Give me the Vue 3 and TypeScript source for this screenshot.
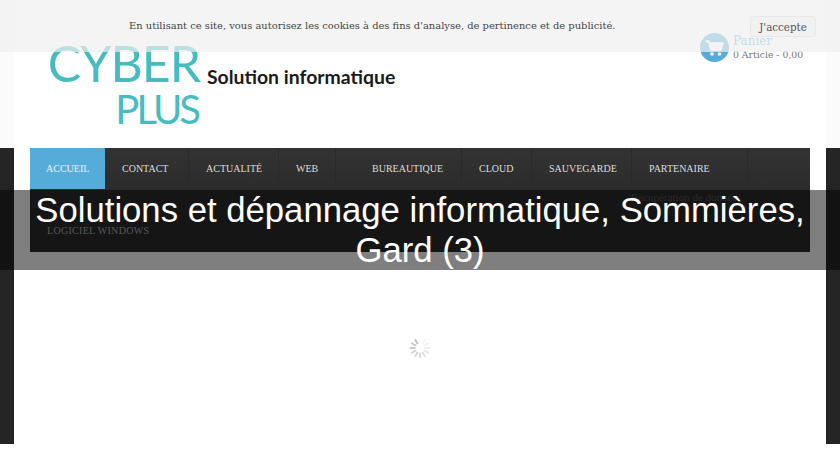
<script setup lang="ts">
interface MenuItem {
  label: string
  width: number
  active?: boolean
  wide?: boolean
}

const menuItems: MenuItem[] = [
  { label: 'Accueil', width: 75, active: true },
  { label: 'Contact', width: 84 },
  { label: 'Actualité', width: 90 },
  { label: 'Web', width: 57 },
  { label: 'Bureautique', width: 126, wide: true },
  { label: 'Cloud', width: 70 },
  { label: 'Sauvegarde', width: 100 },
  { label: 'Partenaire', width: 116 },
]

// darkest spoke sits top-left, as in the reference frame
const spokes = Array.from({ length: 12 }, (_, i) => ({
  angle: i * 30,
  opacity: 0.04 + i * 0.045,
}))
</script>

<template>
  <div class="page">
    <header class="top">
      <div class="logo">
        <div class="logo-mark">
          <span class="cyber">CYBER</span>
          <span class="plus">PLUS</span>
        </div>
        <span class="tagline">Solution informatique</span>
      </div>
      <div class="cart">
        <div class="cart-icon">
          <svg width="20" height="18" viewBox="0 0 20 18">
            <path d="M1 2h3l1.5 9h10.5l2-7H5z" fill="#fff" stroke="#fff" stroke-width="1.4" stroke-linejoin="round" />
            <circle cx="7" cy="15" r="1.8" fill="#fff" />
            <circle cx="14.5" cy="15" r="1.8" fill="#fff" />
          </svg>
        </div>
        <div class="cart-text">
          <div class="cart-title">Panier</div>
          <div class="cart-count">0 Article - 0,00</div>
        </div>
      </div>
    </header>

    <div class="band">
      <main class="panel">
        <nav class="menu">
          <div class="menu-row">
            <a
              v-for="item in menuItems"
              :key="item.label"
              class="menu-item"
              :class="{ active: item.active, wide: item.wide }"
              :style="{ width: item.width + 'px' }"
            >{{ item.label }}</a>
          </div>
          <div class="menu-sub">Récupération de données</div>
          <div class="menu-last">Logiciel Windows</div>
        </nav>
        <div class="loader">
          <svg width="22" height="22" viewBox="-11 -11 22 22">
            <rect
              v-for="s in spokes"
              :key="s.angle"
              x="-1"
              y="-10"
              width="2"
              height="5.5"
              fill="#888"
              :opacity="s.opacity"
              :transform="`rotate(${s.angle})`"
            />
          </svg>
        </div>
      </main>
    </div>

    <div class="cookie">
      <p class="cookie-text">En utilisant ce site, vous autorisez les cookies à des fins d'analyse, de pertinence et de publicité.</p>
      <button class="cookie-btn" type="button">J'accepte</button>
    </div>

    <div class="title-bar">
      <h1>Solutions et dépannage informatique, Sommières, Gard (3)</h1>
    </div>
  </div>
</template>

<style>
html,
body {
  margin: 0;
  background: #fff;
  overflow: hidden;
}
</style>

<style scoped>
.page {
  position: relative;
  width: 840px;
  height: 460px;
  overflow: hidden;
  background: #fff;
}

.top {
  height: 148px;
  box-sizing: border-box;
  padding: 0 37px 0 50px;
  display: flex;
  justify-content: space-between;
  align-items: flex-start;
  background: linear-gradient(to right, #fbfbfb 14px, #fff 14px, #fff 826px, #fbfbfb 826px);
}

.logo {
  display: flex;
  align-items: flex-start;
}

.logo-mark {
  width: 150px;
  display: flex;
  flex-direction: column;
  align-items: flex-end;
  font-family: 'Lato', sans-serif;
  color: #45bcc0;
  padding-top: 38px;
}

.cyber {
  font-size: 50px;
  line-height: 50px;
  letter-spacing: -1px;
}

.plus {
  margin-right: 2px;
  font-size: 40px;
  line-height: 42px;
  letter-spacing: -3px;
}

.tagline {
  margin: 65px 0 0 7px;
  font-family: 'Lato', sans-serif;
  font-size: 19.4px;
  line-height: 24px;
  font-weight: 700;
  color: #1a1a1a;
}

.cart {
  display: flex;
  align-items: center;
  gap: 4px;
  margin-top: 33px;
}

.cart-icon {
  width: 29px;
  height: 29px;
  border-radius: 50%;
  background: #55acd8;
  display: flex;
  align-items: center;
  justify-content: center;
}

.cart-text {
  font-family: 'DejaVu Serif', serif;
  width: 70px;
}

.cart-title {
  font-size: 12px;
  line-height: 14px;
  color: #55acd8;
}

.cart-count {
  font-size: 9.3px;
  line-height: 14px;
  color: #777;
  white-space: nowrap;
}

.band {
  height: 296px;
  background: #252525;
}

.panel {
  height: 296px;
  margin: 0 14px;
  padding: 0 16px;
  background: #fff;
  display: flex;
  flex-direction: column;
}

.menu {
  height: 104px;
  flex-shrink: 0;
  background: #2a2a2a;
  font-family: 'Liberation Serif', serif;
  text-transform: uppercase;
}

.menu-row {
  display: flex;
  height: 41px;
  background: linear-gradient(#333, #2c2c2c);
}

.menu-item {
  box-sizing: border-box;
  height: 41px;
  padding-left: 17px;
  line-height: 41px;
  font-size: 10px;
  color: #ddd;
  white-space: nowrap;
  border-right: 1px solid #2a2a2a;
}

.menu-item.wide {
  padding-left: 36px;
}

.menu-item.active {
  background: #55acd8;
  color: #e8f4fa;
  padding-left: 16px;
  border-right: 0;
}

.menu-sub {
  height: 21px;
  padding-left: 601px;
  font-size: 11px;
  line-height: 16px;
  color: #555;
  text-transform: none;
  white-space: nowrap;
}

.menu-last {
  height: 42px;
  padding-left: 17px;
  font-size: 10px;
  line-height: 42px;
  letter-spacing: 0.3px;
  color: #aaa;
}

.loader {
  flex: 1;
  display: flex;
  justify-content: center;
  padding-top: 85px;
}

.cookie {
  position: absolute;
  top: 0;
  left: 0;
  right: 0;
  height: 52px;
  background: rgba(240, 240, 240, 0.7);
  font-family: 'DejaVu Serif', serif;
  color: #444;
}

.cookie-text {
  position: absolute;
  top: 19px;
  left: 129px;
  margin: 0;
  font-size: 9.94px;
  line-height: 14px;
  white-space: nowrap;
}

.cookie-btn {
  position: absolute;
  top: 16px;
  left: 750px;
  width: 66px;
  height: 21px;
  padding: 0;
  border: 1px solid #e8e8e8;
  border-radius: 3px;
  background: #f1f1f1;
  font-family: inherit;
  font-size: 10.3px;
  color: #555;
}

.title-bar {
  position: absolute;
  top: 190px;
  left: 0;
  right: 0;
  height: 80px;
  background: rgba(0, 0, 0, 0.5);
  display: flex;
  justify-content: center;
}

.title-bar h1 {
  width: 780px;
  margin: 0;
  font-family: 'Liberation Sans', Arial, sans-serif;
  font-size: 34.7px;
  line-height: 40px;
  font-weight: 400;
  color: #fff;
  text-align: center;
}
</style>
